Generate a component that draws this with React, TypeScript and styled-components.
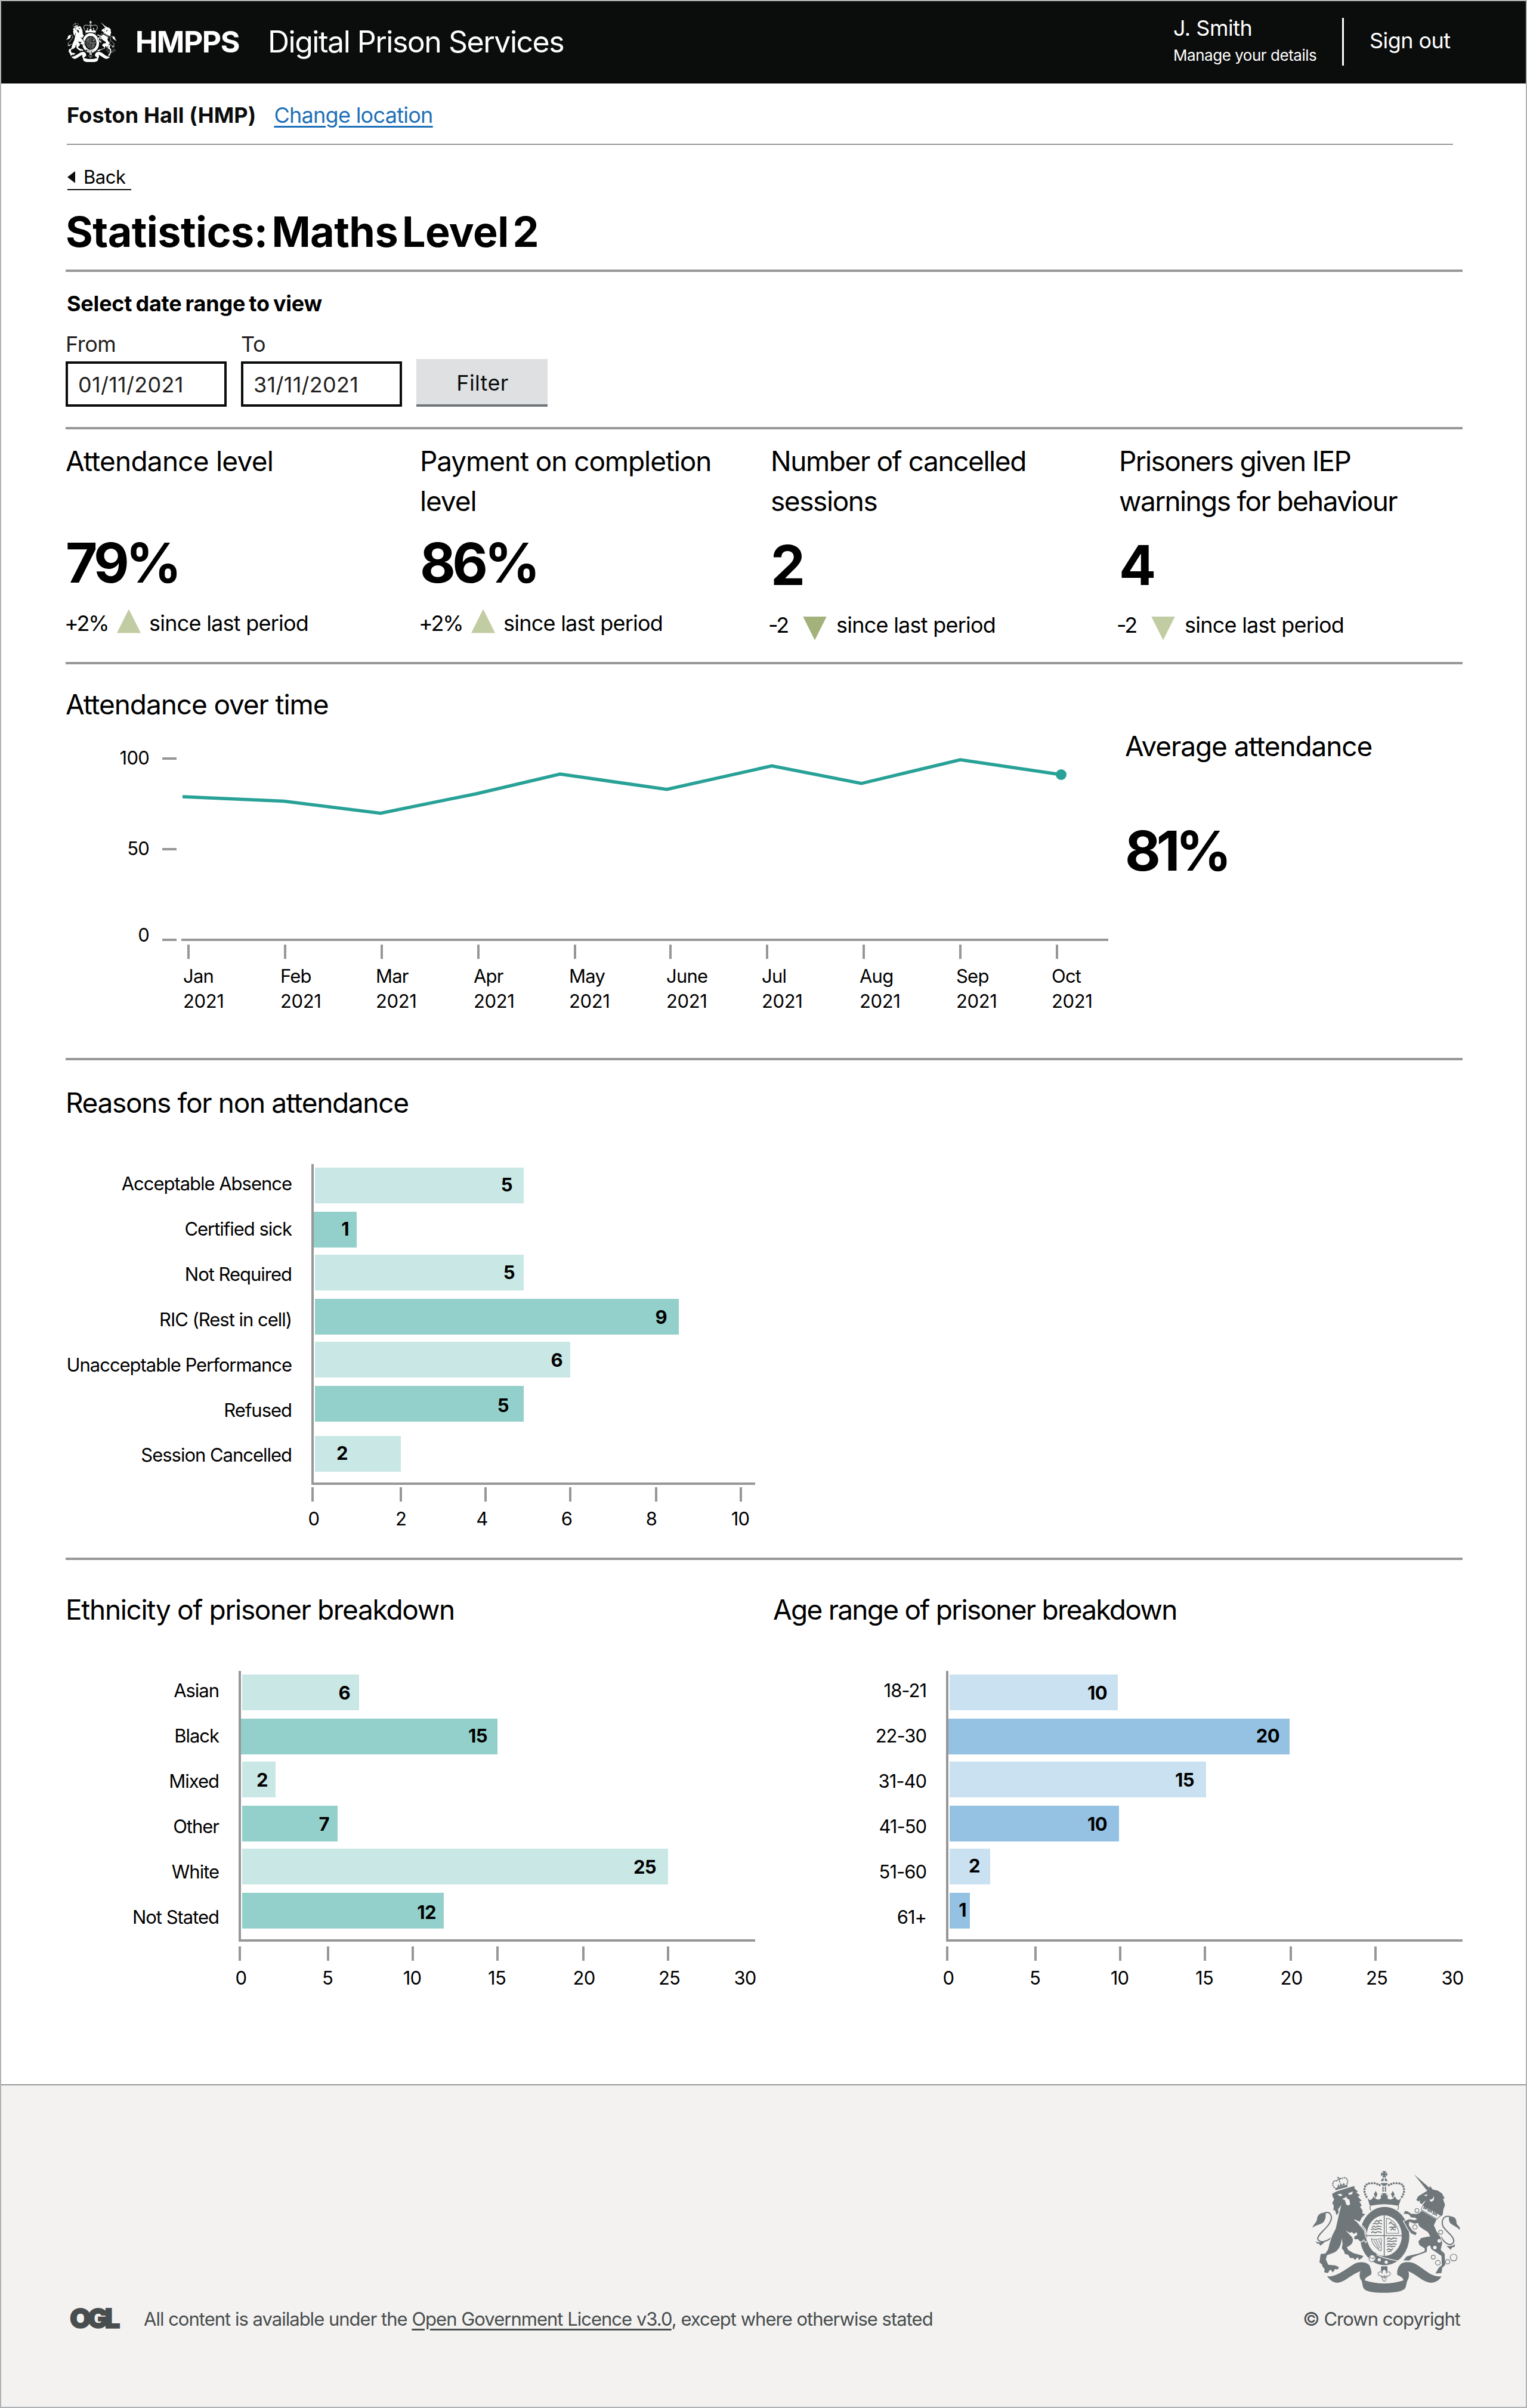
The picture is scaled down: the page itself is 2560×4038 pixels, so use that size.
import React from "react";
import styled, { createGlobalStyle } from "styled-components";

interface Stat {
    title: string;
    tracking: number;
    value: string;
    delta: string;
    direction: "up" | "down";
    strong?: boolean;
}

interface Bar {
    label: string;
    value: number;
    y: number;
    end: number;
    textX: number;
    textY: number;
    flush?: boolean;
}

interface AxisTick {
    label: string;
    x: number;
    tick?: number;
}

interface BarChartInterface {
    bars: Bar[];
    ticks: AxisTick[];
    axisX: number;
    axisY: number;
    tickGap: number;
    labelX: number;
    labelStep: number;
    height: number;
    colours: [string, string];
}

const GREY = "#979797";
const TEAL = "#28a197";
const TEALS: [string, string] = ["#c9e7e5", "#93d0cb"];
const BLUES: [string, string] = ["#cae1f1", "#95c2e3"];

const stats: Stat[] = [
    { title: "Attendance level", tracking: -0.017, value: "79%", delta: "+2%", direction: "up" },
    { title: "Payment on completion level", tracking: -0.024, value: "86%", delta: "+2%", direction: "up" },
    { title: "Number of cancelled sessions", tracking: -0.031, value: "2", delta: "-2", direction: "down", strong: true },
    { title: "Prisoners given IEP warnings for behaviour", tracking: -0.036, value: "4", delta: "-2", direction: "down" },
];

const months = [
    { name: "Jan", x: 197, tick: 206 },
    { name: "Feb", x: 360, tick: 368 },
    { name: "Mar", x: 520, tick: 530 },
    { name: "Apr", x: 684, tick: 692 },
    { name: "May", x: 844, tick: 854 },
    { name: "June", x: 1007, tick: 1014 },
    { name: "Jul", x: 1167, tick: 1176 },
    { name: "Aug", x: 1331, tick: 1338 },
    { name: "Sep", x: 1493, tick: 1500 },
    { name: "Oct", x: 1653, tick: 1662 },
];

const levels = [
    { label: "100", y: 57, textY: 67 },
    { label: "50", y: 209, textY: 219 },
    { label: "0", y: 361, textY: 364 },
];

const attendance = [
    [196, 121], [366, 128.6], [528, 148.8], [690, 115.7], [829, 83],
    [1008, 108.8], [1184, 69.3], [1334, 98.8], [1500, 59], [1669, 84],
];

const reasons: Bar[] = [
    { label: "Acceptable Absence", value: 5, y: 75, end: 768, textX: 749, textY: 115 },
    { label: "Certified sick", value: 1, y: 149, end: 488, textX: 475, textY: 189, flush: true },
    { label: "Not Required", value: 5, y: 221, end: 768, textX: 753, textY: 262 },
    { label: "RIC (Rest in cell)", value: 9, y: 295, end: 1028, textX: 1008, textY: 337 },
    { label: "Unacceptable Performance", value: 6, y: 367, end: 846, textX: 833, textY: 409 },
    { label: "Refused", value: 5, y: 441, end: 768, textX: 743, textY: 485 },
    { label: "Session Cancelled", value: 2, y: 525, end: 562, textX: 473, textY: 565 },
];

const reasonTicks: AxisTick[] = [
    { label: "0", x: 416, tick: 414 },
    { label: "2", x: 562, tick: 562 },
    { label: "4", x: 698, tick: 704 },
    { label: "6", x: 840, tick: 846 },
    { label: "8", x: 982, tick: 990 },
    { label: "10", x: 1131, tick: 1132 },
];

const ethnicity: Bar[] = [
    { label: "Asian", value: 6, y: 75, end: 492, textX: 477, textY: 117 },
    { label: "Black", value: 15, y: 149, end: 724, textX: 707, textY: 189, flush: true },
    { label: "Mixed", value: 2, y: 221, end: 352, textX: 339, textY: 263 },
    { label: "Other", value: 7, y: 295, end: 456, textX: 442, textY: 337 },
    { label: "White", value: 25, y: 367, end: 1010, textX: 990, textY: 409 },
    { label: "Not Stated", value: 12, y: 441, end: 634, textX: 621, textY: 485 },
];

const ages: Bar[] = [
    { label: "18-21", value: 10, y: 75, end: 578, textX: 560, textY: 117 },
    { label: "22-30", value: 20, y: 149, end: 866, textX: 849, textY: 189, flush: true },
    { label: "31-40", value: 15, y: 221, end: 726, textX: 706, textY: 263 },
    { label: "41-50", value: 10, y: 295, end: 580, textX: 560, textY: 337 },
    { label: "51-60", value: 2, y: 367, end: 364, textX: 347, textY: 407 },
    { label: "61+", value: 1, y: 441, end: 330, textX: 324, textY: 481 },
];

const breakdownTicks: AxisTick[] = [
    { label: "0", x: 294, tick: 292 },
    { label: "5", x: 439, tick: 440 },
    { label: "10", x: 581, tick: 582 },
    { label: "15", x: 723, tick: 724 },
    { label: "20", x: 869, tick: 868 },
    { label: "25", x: 1012, tick: 1010 },
    { label: "30", x: 1139 },
];

// one side of the crown's arch, mirrored for the other side
const beads = [
    [388, 224], [388, 210], [391, 197], [399, 187], [411, 182],
    [425, 181], [439, 181], [452, 185], [464, 190], [392, 237], [398, 249],
];

const smallBeads = [
    [236, 202], [230, 193], [229, 183], [232, 174], [240, 169], [249, 169],
    [301, 184], [303, 174], [302, 164], [296, 156], [287, 153], [277, 156],
];

const links = [
    [651, 318, 10], [631, 344, 8], [641, 401, 11], [770, 427, 10],
    [733, 552, 10], [756, 580, 12], [805, 575, 11], [835, 554, 17],
];

const lion = "M226,234 L248,222 L318,200 L336,195 L340,210 L356,222 L346,226 L366,243 L354,247 L374,270 L362,272 L374,292 L366,300 L378,318 L378,333 L392,336 L374,354 L364,374 L340,364 L368,398 L386,420 L390,444 L400,468 L394,476 L384,462 L374,474 L364,472 L356,462 L338,462 L336,450 L352,440 L348,426 L334,436 L326,426 L314,430 L294,418 C312,440 330,450 330,466 C328,490 312,494 300,502 L306,516 L332,532 L362,540 L382,546 L378,554 L370,560 L360,566 L354,552 L340,566 L332,556 L316,556 L306,540 L290,536 L284,520 L274,508 L278,484 L273,456 C272,490 262,512 238,528 L200,542 L194,562 L206,590 L228,592 L242,594 L260,602 L254,614 L240,612 L230,628 L216,614 L204,632 L186,628 L188,612 L178,600 L174,588 L162,578 L168,536 L192,534 L206,512 L214,480 L226,444 L244,408 L252,372 L264,320 L272,290 L256,312 L258,328 L248,342 L240,316 L232,318 L234,294 L226,280 L236,262 L228,248 Z";

const unicorn = "M676,318 L750,362 L736,392 L748,420 L768,450 L778,480 L770,515 L790,535 L793,590 L778,606 L774,632 L744,634 L760,606 L776,592 L774,546 L742,524 L724,512 L716,492 L702,500 L700,526 L668,538 L630,552 L614,568 L583,568 L600,548 L622,542 L660,534 L690,522 L690,508 L664,492 L658,474 L672,456 L700,450 L718,448 L706,426 L680,410 L662,396 L656,380 L640,384 L612,374 L610,392 L628,418 L650,430 L644,442 L622,432 L606,410 L592,384 L586,372 L612,362 L640,366 L652,362 L638,352 L622,352 L608,336 L584,334 L592,320 L604,322 L624,336 L650,336 L664,330 Z";

const unicornHead = "M648,264 L658,246 L682,232 L698,222 L712,210 L716,194 L730,212 L756,218 L776,232 L790,256 L782,260 L792,290 L784,312 L780,340 L766,350 L748,336 L720,322 L678,294 L688,278 L698,268 L686,274 L676,286 L664,278 L668,268 L656,272 Z";

const ribbon = "M200,648 C250,654 300,606 340,584 C366,572 400,576 412,592 C422,612 426,630 420,640 C404,650 390,655 390,668 Q487,698 583,668 C582,655 570,650 552,640 C550,620 555,602 570,586 C590,572 620,575 640,584 C690,610 720,654 774,648 C765,665 745,682 715,680 C680,675 650,640 607,622 C615,640 610,660 602,672 L594,704 C585,725 540,731 487,731 C430,731 390,725 381,704 L374,672 C362,655 360,640 368,622 C320,640 290,675 258,680 C230,682 215,665 200,648 Z";

const Crest = ({ width, ink, paper }: { width: number; ink: string; paper: string }) => (
    <svg width={width} viewBox="126 118 742 614" fill={ink} stroke="none">
        {/* crown */}
        <path d="M400,244 Q404,262 416,266 Q428,262 434,246 Q444,266 462,262 Q474,256 480,248 L494,248 Q500,256 512,262 Q530,266 540,246 Q546,262 558,266 Q570,262 576,244 L560,292 Q487,278 414,292 Z" />
        <path d="M444,220 L453,236 L444,256 L435,236 Z M530,220 L539,236 L530,256 L521,236 Z M474,232 L500,232 L494,244 L504,238 L504,260 L494,252 L498,268 L476,268 L480,252 L470,260 L470,238 L480,244 Z" />
        <path d="M478,198 h6 v26 h-6 Z M490,198 h6 v26 h-6 Z" />
        <path d="M469,180 H505 Q500,194 487,194 Q474,194 469,180 Z M470,170 Q474,158 484,155 V170 Z M504,170 Q500,158 490,155 V170 Z" />
        <path d="M477,120 H497 L491,132 L502,127 V146 L491,140 L497,152 H477 L483,140 L471,146 V127 L483,132 Z" />
        {beads.map(([x, y]) => (
            <React.Fragment key={`${x}-${y}`}>
                <circle cx={x} cy={y} r={5.6} />
                <circle cx={974 - x} cy={y} r={5.6} />
            </React.Fragment>
        ))}
        <path d="M420,292 Q487,276 556,292 Q562,302 554,316 M420,292 Q410,302 420,318" fill="none" stroke={ink} strokeWidth={4} />

        {/* garter and shield */}
        <ellipse cx={489} cy={446} rx={124} ry={146} />
        <ellipse cx={487} cy={444} rx={88} ry={102} fill={paper} />
        <path d="M487,342 V546 M399,444 H575" stroke={ink} strokeWidth={4.5} fill="none" />
        <g fill="none" stroke={ink} strokeWidth={5}>
            <path d="M440,376 l10,-8 l8,6 l8,-8 l10,4 M430,386 l8,-4 l12,4 l12,-6 l14,6 M424,404 l10,-8 l10,6 l12,-6 l18,4 M420,414 l10,-4 l14,4 l14,-6 l16,6 M422,430 l8,-6 l12,6 l12,-6 l20,4" />
            <path d="M500,462 l10,-6 l12,6 l12,-6 l18,4 M502,474 l10,-4 l12,4 l26,-4 M500,490 l10,-6 l12,6 l12,-6 l14,4 M502,500 l10,-4 l12,4 l18,-4 M500,516 l10,-6 l10,6 l12,-6 M504,524 l20,-2" />
            <path d="M510,386 l10,-10 l8,10 l10,4 l6,14 l-12,-4 l-6,10 l-8,8 M512,404 l12,-4 l10,14 l10,2" />
        </g>
        <g fill="none" stroke={ink} strokeWidth={3}>
            <path d="M498,356 V432 H562 M500,356 Q550,372 560,430" />
            <path d="M422,460 Q446,466 472,458 V520 Q460,520 452,508 Q430,492 422,460 Z M434,466 L460,512 M446,466 L466,506 M458,464 L470,490" />
        </g>
        <path d="M448,540 Q490,560 556,570" fill="none" stroke={paper} strokeWidth={4} />
        <circle cx={426} cy={558} r={16} fill={paper} />
        <path d="M448,538 Q436,520 418,534 Q408,546 418,554 Q402,564 420,574 Q436,578 442,564 M424,554 a6,6 0 1 0 10,-4" fill="none" stroke={ink} strokeWidth={3} />
        <circle cx={462} cy={565} r={8} fill={paper} />
        <circle cx={497} cy={577} r={8} fill={paper} />

        {/* lion */}
        <path d="M226,450 C206,470 166,486 154,462 C146,436 224,398 222,350 C216,320 192,326 182,334" fill="none" stroke={ink} strokeWidth={6} />
        <path d="M194,330 C166,324 150,344 150,362 C146,382 130,388 127,406 C146,384 178,392 188,366 C196,352 192,342 194,330 Z" />
        <path d="M142,472 Q160,486 196,466 Q184,484 164,496 Q168,484 150,484 Z" />
        <path d={lion} stroke={paper} strokeWidth={8} paintOrder="stroke" />
        <path d="M252,236 L270,234 L278,244 L264,246 Z M306,232 L330,222 L326,236 L310,240 Z M276,260 L300,248 L298,256 L312,264 L316,286 Q306,298 296,286 L290,266 Z" fill={paper} />
        <path d="M338,364 L366,382 L392,412 L398,438" fill="none" stroke={paper} strokeWidth={5} />
        <path d="M240,206 L300,188 L304,199 L243,216 Z M252,202 L256,186 L264,196 L268,178 L276,192 L284,178 L290,190 Z" />
        {smallBeads.map(([x, y]) => <circle key={`${x}-${y}`} cx={x} cy={y} r={3.6} />)}
        <path d="M250,150 L262,158 L270,156 M258,150 L264,178 M250,164 L272,158" fill="none" stroke={ink} strokeWidth={4} />

        {/* unicorn */}
        <path d="M816,348 C786,342 770,366 782,398 C796,424 838,446 836,474 C824,502 792,488 770,448" fill="none" stroke={ink} strokeWidth={6} />
        <path d="M814,346 C844,348 850,362 850,384 L866,404 V416 C852,398 826,392 816,378 C810,366 810,356 814,346 Z M842,486 Q826,502 798,494 Q808,504 822,516 Q820,502 840,500 Z" />
        <path d={unicorn} stroke={paper} strokeWidth={8} paintOrder="stroke" />
        <path d={unicornHead} />
        <path d="M636,136 L716,206 L702,218 Z" />
        <path d="M684,242 L704,236 L700,246 Z M712,264 Q738,262 734,242 Q744,268 722,274 Z" fill={paper} />
        <path d="M678,292 L670,316 L752,364 L770,344 Z" fill={paper} />
        <path d="M680,294 L672,314 L752,361 L768,344" fill="none" stroke={ink} strokeWidth={3} />
        <path d="M684,310 l4,-10 l6,10 l4,-8 l6,12 M706,324 l4,-12 l6,12 l5,-8 l4,14 M730,338 l5,-12 l6,12 l6,-6 l2,14" fill="none" stroke={ink} strokeWidth={5} />
        <circle cx={763} cy={470} r={9} fill={paper} />
        <circle cx={741} cy={504} r={9} fill={paper} />
        {links.map(([x, y, r]) => (
            <circle key={`${x}-${y}`} cx={x} cy={y} r={r} fill="none" stroke={ink} strokeWidth={3.5} />
        ))}

        {/* scroll and pendant */}
        <path d={ribbon} />
        <path d="M388,668 Q487,700 585,668" fill={paper} />
        <rect x={471} y={598} width={32} height={26} />
        <path d="M487,610 Q500,622 497,634 Q506,618 518,632 Q520,646 500,646 L494,650 Q500,672 487,674 Q474,672 480,650 L474,646 Q454,646 456,632 Q468,618 477,634 Q474,622 487,610 Z" fill={paper} stroke={ink} strokeWidth={3} />
        <path d="M470,651 H504 M487,642 V660" fill="none" stroke={ink} strokeWidth={4} />
    </svg>
);

const LineChart = () => (
    <ChartSvg width={1776} height={540} viewBox="0 0 1776 540">
        {levels.map(level => (
            <React.Fragment key={level.label}>
                <text x={140} y={level.textY} textAnchor="end">{level.label}</text>
                <line x1={162} x2={186} y1={level.y} y2={level.y} />
            </React.Fragment>
        ))}
        <line x1={194} x2={1748} y1={361} y2={361} />
        {months.map(month => (
            <React.Fragment key={month.name}>
                <line x1={month.tick} x2={month.tick} y1={369} y2={393} />
                <text x={month.x} y={433}>{month.name}</text>
                <YearLabel x={month.x} y={475}>2021</YearLabel>
            </React.Fragment>
        ))}
        <polyline points={attendance.map(point => point.join(",")).join(" ")} fill="none" stroke={TEAL} strokeWidth={5.5} />
        <circle cx={1669} cy={84} r={9} fill={TEAL} />
    </ChartSvg>
);

const BarChart: React.FC<BarChartInterface> = ({ bars, ticks, axisX, axisY, tickGap, labelX, labelStep, height, colours }) => (
    <ChartSvg width={1156} height={height} viewBox={`0 0 1156 ${height}`}>
        {bars.map((bar, i) => {
            const start = bar.flush ? axisX + 2 : axisX + 4;
            return (
                <React.Fragment key={bar.label}>
                    <BarLabel x={labelX} y={113 + i * labelStep} textAnchor="end">{bar.label}</BarLabel>
                    <rect x={start} y={bar.y} width={bar.end - start} height={60} fill={colours[i % 2]} />
                    <BarValue x={bar.textX} y={bar.textY} textAnchor="end">{bar.value}</BarValue>
                </React.Fragment>
            );
        })}
        <line x1={axisX} x2={axisX} y1={69} y2={axisY + 2} />
        <line x1={axisX - 2} x2={1156} y1={axisY} y2={axisY} />
        {ticks.map(({ label, x, tick }) => (
            <React.Fragment key={label}>
                {tick !== undefined && <line x1={tick} x2={tick} y1={axisY + tickGap} y2={axisY + tickGap + 24} />}
                <text x={x} y={axisY + tickGap + 64} textAnchor="middle">{label}</text>
            </React.Fragment>
        ))}
    </ChartSvg>
);

const App: React.FC = () => {
    return (
        <Page>
            <GlobalStyle />
            <Header>
                <Crest width={84} ink="#ffffff" paper="#0b0c0c" />
                <Organisation>HMPPS</Organisation>
                <ServiceName>Digital Prison Services</ServiceName>
                <User>
                    <UserName>J. Smith</UserName>
                    <UserLink>Manage your details</UserLink>
                </User>
                <SignOut>Sign out</SignOut>
            </Header>
            <LocationBar>
                <strong>Foston Hall (HMP)</strong>
                <a>Change location</a>
            </LocationBar>
            <Main>
                <BackLink>
                    <BackArrow />
                    Back
                </BackLink>
                <Title>Statistics: Maths Level 2</Title>

                <FilterSection>
                    <Legend>Select date range to view</Legend>
                    <FilterRow>
                        <Field>
                            <FieldLabel>From</FieldLabel>
                            <DateInput defaultValue="01/11/2021" />
                        </Field>
                        <Field>
                            <FieldLabel>To</FieldLabel>
                            <DateInput defaultValue="31/11/2021" />
                        </Field>
                        <FilterButton>Filter</FilterButton>
                    </FilterRow>
                </FilterSection>

                <StatsSection>
                    {stats.map(stat => (
                        <StatCell key={stat.title}>
                            <StatTitle $tracking={stat.tracking}>{stat.title}</StatTitle>
                            <StatValue $low={stat.direction === "down"}>{stat.value}</StatValue>
                            <StatDelta $direction={stat.direction}>
                                <span>{stat.delta}</span>
                                <Arrow $direction={stat.direction} $strong={stat.strong} />
                                since last period
                            </StatDelta>
                        </StatCell>
                    ))}
                </StatsSection>

                <AttendanceSection>
                    <div>
                        <Heading $tracking={-0.024}>Attendance over time</Heading>
                        <LineChart />
                    </div>
                    <Average>
                        <Heading $tracking={-0.024}>Average attendance</Heading>
                        <AverageValue>81%</AverageValue>
                    </Average>
                </AttendanceSection>

                <ReasonsSection>
                    <Heading $tracking={-0.029}>Reasons for non attendance</Heading>
                    <BarChart
                        bars={reasons}
                        ticks={reasonTicks}
                        axisX={414}
                        axisY={605}
                        tickGap={6}
                        labelX={379}
                        labelStep={75.9}
                        height={700}
                        colours={TEALS}
                    />
                </ReasonsSection>

                <BreakdownSection>
                    <div>
                        <Heading $tracking={-0.029}>Ethnicity of prisoner breakdown</Heading>
                        <BarChart
                            bars={ethnicity}
                            ticks={breakdownTicks}
                            axisX={292}
                            axisY={521}
                            tickGap={10}
                            labelX={257}
                            labelStep={76}
                            height={620}
                            colours={TEALS}
                        />
                    </div>
                    <div>
                        <Heading $tracking={-0.038}>Age range of prisoner breakdown</Heading>
                        <BarChart
                            bars={ages}
                            ticks={breakdownTicks}
                            axisX={292}
                            axisY={521}
                            tickGap={10}
                            labelX={257}
                            labelStep={76}
                            height={620}
                            colours={BLUES}
                        />
                    </div>
                </BreakdownSection>
            </Main>
            <Footer>
                <OglLogo>OGL</OglLogo>
                <Licence>
                    All content is available under the <a>Open Government Licence v3.0</a>, except where otherwise stated
                </Licence>
                <Copyright>
                    <Crest width={248} ink="#6f777b" paper="#f3f2f1" />
                    <span>© Crown copyright</span>
                </Copyright>
            </Footer>
        </Page>
    );
};

const GlobalStyle = createGlobalStyle`
    * {
        box-sizing: border-box;
    }

    body {
        margin: 0;
        background-color: #ffffff;
        color: #0b0c0c;
        font-family: Inter, "Noto Sans", sans-serif;
        letter-spacing: -0.5px;
    }
`

const Page = styled.div`
    display: flex;
    flex-direction: column;
    width: 2560px;
    height: 4038px;
    border: 2px solid #b1b4b6;
`

const Header = styled.header`
    display: flex;
    align-items: center;
    height: 138px;
    padding: 0 122px 3px 109px;
    background-color: #0b0c0c;
    color: #ffffff;
    white-space: nowrap;
`

const Organisation = styled.span`
    width: 222px;
    margin-left: 32px;
    font-size: 50px;
    font-weight: 700;
    letter-spacing: -0.03em;
`

const ServiceName = styled.span`
    font-size: 50px;
    letter-spacing: -0.03em;
`

const User = styled.div`
    display: flex;
    flex-direction: column;
    justify-content: center;
    width: 286px;
    height: 80px;
    margin-left: auto;
    border-right: 3px solid #ffffff;
`

const UserName = styled.span`
    font-size: 36px;
    line-height: 46px;
`

const UserLink = styled.span`
    font-size: 26px;
    line-height: 45px;
    letter-spacing: -0.018em;
`

const SignOut = styled.span`
    width: 140px;
    margin-left: 43px;
    padding-bottom: 4px;
    font-size: 36px;
    letter-spacing: -0.016em;
`

const LocationBar = styled.div`
    display: flex;
    align-items: center;
    gap: 30px;
    height: 103px;
    margin: 0 122px 0 110px;
    padding-top: 5px;
    border-bottom: 2px solid ${GREY};
    font-size: 36px;

    strong {
        letter-spacing: 0.003em;
    }

    a {
        color: #1d70b8;
        letter-spacing: -0.02em;
        text-decoration: underline;
        text-decoration-thickness: 3px;
        text-underline-offset: 5px;
    }
`

const Main = styled.main`
    padding: 0 106px 0 108px;
    color: #000000;
`

const BackLink = styled.a`
    display: flex;
    align-items: center;
    gap: 14px;
    width: 107px;
    height: 42px;
    margin: 34px 0 0 3px;
    border-bottom: 2px solid #0b0c0c;
    font-size: 31px;
    line-height: 40px;
`

const BackArrow = styled.span`
    border: solid transparent;
    border-width: 10px 13px 10px 0;
    border-right-color: #0b0c0c;
`

const Title = styled.h1`
    height: 137px;
    margin: 0;
    padding-top: 20px;
    border-bottom: 4px solid ${GREY};
    font-size: 70px;
    line-height: 100px;
    letter-spacing: -0.008em;
    word-spacing: -0.13em;
`

const Section = styled.section`
    border-bottom: 4px solid ${GREY};
`

const FilterSection = styled(Section)`
    height: 264px;
    padding-top: 28px;
`

const Legend = styled.div`
    padding-left: 2px;
    font-size: 36px;
    font-weight: 700;
    line-height: 50px;
    letter-spacing: -0.006em;
    word-spacing: -0.06em;
`

const FilterRow = styled.div`
    display: flex;
    align-items: flex-end;
    gap: 24px;
    margin-top: 23px;
`

const Field = styled.label`
    display: flex;
    flex-direction: column;
    gap: 9px;
    width: 270px;
`

const FieldLabel = styled.span`
    color: #231f20;
    font-size: 36px;
    line-height: 40px;
`

const DateInput = styled.input`
    width: 100%;
    height: 76px;
    padding: 2px 0 0 17px;
    border: 4px solid #0b0c0c;
    border-radius: 0;
    background: #ffffff;
    color: #231f20;
    font-family: inherit;
    font-size: 36px;
    letter-spacing: 0.008em;
`

const FilterButton = styled.button`
    width: 220px;
    height: 80px;
    padding: 3px 0 0 2px;
    border: 0;
    border-bottom: 4px solid #6f777b;
    background-color: #dee0e2;
    color: #0b0c0c;
    font-family: inherit;
    font-size: 36px;
    letter-spacing: 0.01em;
`

const StatsSection = styled(Section)`
    display: grid;
    grid-template-columns: 594px 588px 584px 1fr;
    height: 394px;
    padding-top: 20px;
`

const StatCell = styled.div`
    display: flex;
    flex-direction: column;
`

const StatTitle = styled.h2<{ $tracking: number }>`
    width: 510px;
    height: 134px;
    margin: 0;
    font-size: 46px;
    font-weight: 400;
    line-height: 67px;
    letter-spacing: ${({ $tracking }) => $tracking}em;
`

const StatValue = styled.div<{ $low: boolean }>`
    margin-top: ${({ $low }) => ($low ? 24 : 20)}px;
    font-size: 92px;
    font-weight: 700;
    line-height: 100px;
    letter-spacing: -0.062em;
`

const StatDelta = styled.div<{ $direction: string }>`
    display: flex;
    align-items: center;
    gap: ${({ $direction }) => ($direction === "up" ? 14 : 16)}px;
    height: 50px;
    margin-top: ${({ $direction }) => ($direction === "up" ? 26 : 25)}px;
    font-size: 36px;
    line-height: 50px;
    letter-spacing: -0.021em;
    white-space: nowrap;

    span:first-child {
        width: ${({ $direction }) => ($direction === "up" ? 74 : 42)}px;
        margin-left: ${({ $direction }) => ($direction === "up" ? -2 : -4)}px;
        letter-spacing: -0.06em;
    }
`

const Arrow = styled.i<{ $direction: string; $strong?: boolean }>`
    width: 40px;
    height: 40px;
    margin-top: ${({ $direction }) => ($direction === "up" ? -7 : 11)}px;
    background-color: ${({ $strong }) => ($strong ? "#a3b27a" : "#c2cca3")};
    clip-path: ${({ $direction }) => ($direction === "up" ? "polygon(50% 0, 100% 100%, 0 100%)" : "polygon(0 0, 100% 0, 50% 100%)")};
`

const AttendanceSection = styled(Section)`
    display: flex;
    height: 664px;
    padding-top: 34px;
`

const Heading = styled.h2<{ $tracking: number }>`
    margin: 0;
    font-size: 46px;
    font-weight: 400;
    line-height: 67px;
    letter-spacing: ${({ $tracking }) => $tracking}em;
    white-space: nowrap;
`

const Average = styled.div`
    padding-top: 70px;
`

const AverageValue = styled.div`
    margin-top: 92px;
    font-size: 92px;
    font-weight: 700;
    line-height: 100px;
    letter-spacing: -0.078em;
`

const ReasonsSection = styled(Section)`
    height: 838px;
    padding-top: 38px;
`

const BreakdownSection = styled.section`
    display: grid;
    grid-template-columns: 1156px 1156px;
    gap: 30px;
    height: 879px;
    padding-top: 50px;
`

const ChartSvg = styled.svg`
    display: block;
    overflow: visible;
    font-size: 31px;
    letter-spacing: -0.025em;

    line {
        stroke: ${GREY};
        stroke-width: 4px;
    }
`

const YearLabel = styled.text`
    letter-spacing: -0.012em;
`

const BarLabel = styled.text`
    letter-spacing: -0.033em;
`

const BarValue = styled.text`
    font-weight: 700;
    letter-spacing: -0.02em;
`

const Footer = styled.footer`
    display: flex;
    align-items: flex-end;
    flex: 1;
    padding: 0 110px 122px 115px;
    border-top: 2px solid #979996;
    background-color: #f3f2f1;
    color: #484d4d;
    font-size: 31px;
    line-height: 50px;
    letter-spacing: -0.032em;
`

const OglLogo = styled.span`
    width: 124px;
    padding-bottom: 6px;
    font-size: 46px;
    font-weight: 900;
    line-height: 42px;
    letter-spacing: -0.13em;
    -webkit-text-stroke: 1.5px #484d4d;
`

const Licence = styled.span`
    a {
        text-decoration: underline;
        text-decoration-thickness: 3px;
        text-underline-offset: 5px;
    }
`

const Copyright = styled.div`
    display: flex;
    flex-direction: column;
    align-items: flex-end;
    gap: 19px;
    margin-left: auto;
`

export default App;
